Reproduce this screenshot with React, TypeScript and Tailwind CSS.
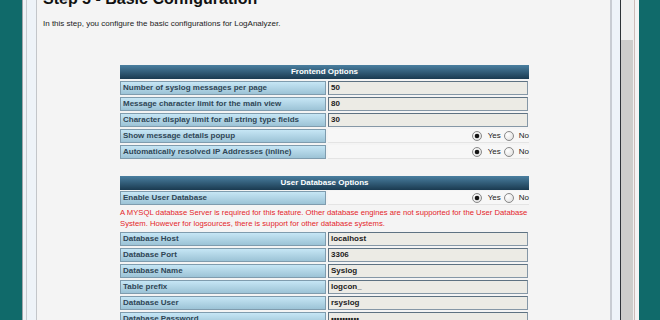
import React from "react";

const FONT = { fontFamily: '"Liberation Sans", Arial, sans-serif' };

function Radio({ checked }: { checked: boolean }) {
  return (
    <svg width="10" height="10" viewBox="0 0 10 10" className="block shrink-0">
      <defs>
        <radialGradient id={checked ? "rg1" : "rg0"} cx="0.35" cy="0.35" r="0.7">
          <stop offset="0" stopColor="#ffffff" />
          <stop offset="1" stopColor="#e2e2e2" />
        </radialGradient>
      </defs>
      <circle cx="5" cy="5" r="4.5" fill={`url(#${checked ? "rg1" : "rg0"})`} stroke="#7d7d7d" strokeWidth="0.9" />
      {checked && <circle cx="5" cy="5" r="2.3" fill="#151515" />}
    </svg>
  );
}

function Header({ title }: { title: string }) {
  return (
    <div className="h-[14px] flex items-center justify-center bg-[linear-gradient(to_bottom,#4a7fa0,#1a3a50)] text-white font-bold text-[8px] leading-[14px]">
      {title}
    </div>
  );
}

function Label({ text }: { text: string }) {
  return (
    <div className="w-[206px] h-[14px] shrink-0 flex items-center pl-[2px] border border-[#7f9cae] bg-[linear-gradient(to_bottom,#c6e6f5,#9cc3d6)] text-[#2f4656] font-bold text-[8px] leading-[12px] whitespace-nowrap">
      {text}
    </div>
  );
}

function InputRow({ label, value, mt = "mt-[2px]" }: { label: string; value: string; mt?: string }) {
  return (
    <div className={`flex gap-[2px] ${mt}`}>
      <Label text={label} />
      <div className="w-[200px] h-[14px] flex items-center pl-[2px] border border-[#8597a6] border-t-[#5e7282] border-l-[#5e7282] bg-[#ecebe5] text-[#1c1c1c] font-bold text-[8px] leading-[12px] whitespace-nowrap">
        {value}
      </div>
    </div>
  );
}

function RadioRow({ label, mt = "mt-[2px]" }: { label: string; mt?: string }) {
  return (
    <div className={`flex gap-[2px] ${mt}`}>
      <Label text={label} />
      <div className="flex-1 h-[14px] flex items-center justify-end bg-[#f7f7f7] border-b border-[#e4e4e4] text-[8px] text-[#222] leading-[12px]">
        <Radio checked />
        <span className="ml-[6px]">Yes</span>
        <span className="ml-[3px]"><Radio checked={false} /></span>
        <span className="ml-[5px]">No</span>
      </div>
    </div>
  );
}

export default function App() {
  return (
    <div className="w-[660px] h-[320px] overflow-hidden flex bg-[#106a6a]" style={FONT}>
      {/* left frame */}
      <div className="w-[22px] shrink-0 bg-[#106a6a]" />
      <div className="w-[1px] shrink-0 bg-[#9ea4aa]" />
      <div className="w-[3px] shrink-0 bg-[#eef2f6]" />
      <div className="w-[1px] shrink-0 bg-[#c6cbd1]" />
      <div className="w-[9px] shrink-0 bg-[#eef3f8]" />
      <div className="w-[1px] shrink-0 bg-[#c3c6ca]" />

      {/* content */}
      <div className="w-[573px] shrink-0 bg-[#f4f4f4] flex flex-col">
        <div className="pl-[6px] mt-[-9px] text-[16px] leading-[16px] font-bold text-[#111] whitespace-nowrap">
          Step 5 - Basic Configuration
        </div>
        <div className="pl-[6px] mt-[11px] text-[8px] leading-[11px] text-[#222] whitespace-nowrap">
          In this step, you configure the basic configurations for LogAnalyzer.
        </div>

        <div className="ml-[83px] w-[409px] mt-[36px]">
          <Header title="Frontend Options" />
          <InputRow label="Number of syslog messages per page" value="50" />
          <InputRow label="Message character limit for the main view" value="80" />
          <InputRow label="Character display limit for all string type fields" value="30" />
          <RadioRow label="Show message details popup" />
          <RadioRow label="Automatically resolved IP Addresses (inline)" />
        </div>

        <div className="ml-[83px] w-[409px] mt-[17px]">
          <Header title="User Database Options" />
          <RadioRow label="Enable User Database" mt="mt-[1px]" />
          <div className="mt-[2px] text-[7.7px] leading-[11px] text-[#e4252a]">
            A MYSQL database Server is required for this feature. Other database engines are not supported for the User Database System. However for logsources, there is support for other database systems.
          </div>
          <InputRow label="Database Host" value="localhost" mt="mt-[3px]" />
          <InputRow label="Database Port" value="3306" />
          <InputRow label="Database Name" value="Syslog" />
          <InputRow label="Table prefix" value="logcon_" />
          <InputRow label="Database User" value="rsyslog" />
          <InputRow label="Database Password" value="••••••••••" />
        </div>
      </div>

      {/* right frame + scrollbar */}
      <div className="w-[2px] shrink-0 bg-[#c8ccd3]" />
      <div className="w-[8px] shrink-0 bg-[#eef3f9]" />
      <div className="w-[1px] shrink-0 bg-[#2e3338]" />
      <div className="w-[12px] shrink-0 flex flex-col">
        <div className="h-[40px] bg-[#efefef]" />
        <div className="flex-1 bg-[#cdcdcb]" />
      </div>
      <div className="w-[1px] shrink-0 bg-[#f0f0f0]" />
      <div className="w-[1px] shrink-0 bg-[#cdbcb8]" />
      <div className="w-[4px] shrink-0 bg-[#f4f4f4]" />
      <div className="flex-1 bg-[#106a6a]" />
    </div>
  );
}
